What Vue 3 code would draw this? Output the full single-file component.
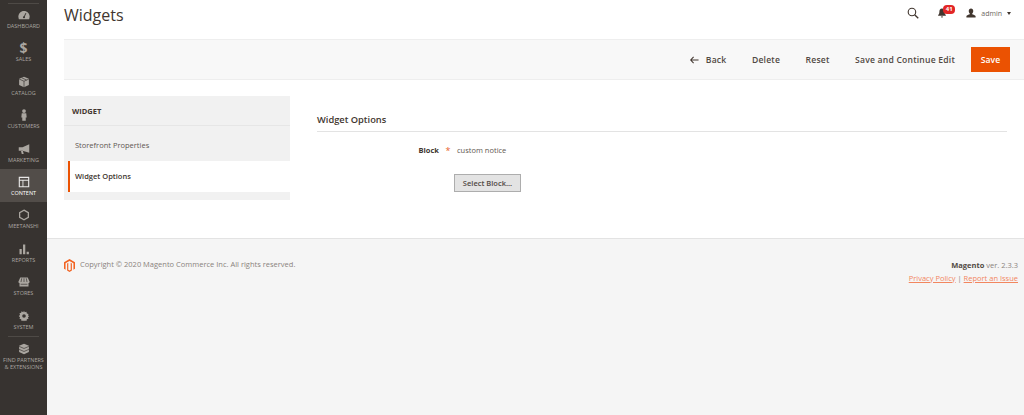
<template>
  <div class="page">
    <nav class="sidebar">
      <div class="side-line"></div>
      <div
        v-for="item in menu"
        :key="item.label"
        class="menu-item"
        :class="{ active: item.active, 'has-rule': item.rule }"
      >
        <span v-if="item.glyph" class="menu-glyph">{{ item.glyph }}</span>
        <svg v-else class="menu-icon" viewBox="0 0 16 16" v-html="item.icon"></svg>
        <span class="menu-label">{{ item.label }}</span>
      </div>
    </nav>

    <div class="main">
      <header class="topbar">
        <h1 class="page-title">Widgets</h1>
        <div class="top-actions">
          <svg class="search-icon" viewBox="0 0 16 16">
            <circle cx="6.6" cy="6.6" r="5" fill="none" stroke="#41362f" stroke-width="1.5" />
            <path d="M10.2 10.2 15 15" stroke="#41362f" stroke-width="1.8" />
          </svg>
          <div class="bell">
            <svg viewBox="0 0 12 13" class="bell-icon">
              <path d="M6 0.8c2.4 0 3.4 1.8 3.4 4 0 2.2.6 3.4 1.6 4.4v.8H1v-.8c1-1 1.6-2.2 1.6-4.4 0-2.2 1-4 3.4-4ZM4.6 11h2.8c0 .9-.6 1.400-1.400 1.400S4.600 11.900 4.600 11Z" fill="#41362f" />
            </svg>
            <span class="badge">41</span>
          </div>
          <div class="user">
            <svg viewBox="0 0 12 12" class="user-icon">
              <path d="M6 .5c1.700 0 2.700 1.200 2.700 3 0 1.400-.6 2.500-1.300 3.100v1c1.200.5 3.600 1 4.100 2.100V11.500H.5V9.700C1 8.600 3.400 8.100 4.600 7.600v-1C3.900 6 3.300 4.900 3.300 3.500 3.300 1.700 4.300.5 6 .5Z" fill="#41362f" />
            </svg>
            <span class="user-name">admin</span>
            <span class="caret"></span>
          </div>
        </div>
      </header>

      <div class="action-bar">
        <span class="action back">
          <svg viewBox="0 0 10 8" class="back-icon">
            <path d="M4 .6.8 4 4 7.400M1 4h8.500" fill="none" stroke="#41362f" stroke-width="1.200" />
          </svg>
          Back
        </span>
        <span class="action">Delete</span>
        <span class="action">Reset</span>
        <span class="action">Save and Continue Edit</span>
        <button class="save-btn">Save</button>
      </div>

      <div class="content">
        <aside class="tabs">
          <div class="tabs-title">WIDGET</div>
          <div class="tab">Storefront Properties</div>
          <div class="tab current">Widget Options</div>
        </aside>

        <section class="form">
          <h2 class="form-title">Widget Options</h2>
          <div class="field">
            <span class="field-label">Block</span>
            <span class="req">*</span>
            <span class="field-value">custom notice</span>
          </div>
          <div class="field-btn">
            <button class="select-btn">Select Block...</button>
          </div>
        </section>
      </div>

      <footer class="footer">
        <div class="copyright">
          <svg viewBox="0 0 24 28" class="logo">
            <path d="M12 0 0 7v14l3.400 2V9l8.600-5 8.600 5v14l3.400-2V7Z" fill="#f26322" />
            <path d="M12 28l-5.200-3V9.500l2.600-1.500v15.500l2.600 1.500 2.600-1.500V8l2.600 1.500V25Z" fill="#f26322" />
          </svg>
          <span>Copyright © 2020 Magento Commerce Inc. All rights reserved.</span>
        </div>
        <div class="legal">
          <div class="version"><strong>Magento</strong> ver. 2.3.3</div>
          <div class="links"><a>Privacy Policy</a> | <a>Report an Issue</a></div>
        </div>
      </footer>
    </div>
  </div>
</template>

<script setup>
const menu = [
  {
    label: 'DASHBOARD',
    icon: '<path d="M8 2.500C3.600 2.500.5 5.900.5 10c0 1.200.2 2.300.7 3.500h13.600c.5-1.200.7-2.300.7-3.500 0-4.100-3.100-7.500-7.500-7.500Z" fill="#aaa6a0"/><path d="M8 11 10.500 5.500" stroke="#373330" stroke-width="1.300"/><circle cx="8" cy="11" r="1.400" fill="#373330"/>',
  },
  {
    label: 'SALES',
    glyph: '$',
  },
  {
    label: 'CATALOG',
    icon: '<path d="M8 1 14.500 3.800V12L8 15 1.500 12V3.800Z" fill="#aaa6a0"/><path d="M1.500 4 8 7l6.500-3M8 7v8M5 2.400l6.500 3" fill="none" stroke="#373330" stroke-width=".9"/>',
  },
  {
    label: 'CUSTOMERS',
    icon: '<circle cx="8" cy="2.700" r="2.500" fill="#aaa6a0"/><path d="M5 5.800h6l.6 5.500H10.300V15.800H5.700V11.300H4.400Z" fill="#aaa6a0"/>',
  },
  {
    label: 'MARKETING',
    icon: '<path d="M15 1.800V13L6 10.300H1V5.500h5Z" fill="#aaa6a0"/><path d="M4 10.800h2.600l1 3.700H5Z" fill="#aaa6a0"/>',
  },
  {
    label: 'CONTENT',
    active: true,
    icon: '<path d="M1 1h14v14H1Z" fill="#e8e7e6"/><path d="M2.500 2.500h11v2.500h-11ZM2.500 6.200h3.500v7.300H2.500ZM7.200 6.200h6.300v7.300H7.200Z" fill="#524d49"/>',
  },
  {
    label: 'MEETANSHI',
    icon: '<path d="M8 1.500 13.800 4.800V11.200L8 14.500 2.200 11.200V4.800Z" fill="none" stroke="#aaa6a0" stroke-width="1.700"/>',
  },
  {
    label: 'REPORTS',
    icon: '<path d="M2 8h3v7H2ZM6.700 2h3v13h-3ZM11.500 11.500h3V15h-3Z" fill="#aaa6a0"/>',
  },
  {
    label: 'STORES',
    icon: '<path d="M3 2h10l2.500 5.500c0 1.200-.8 1.800-1.500 1.800V14H2V9.300C1.300 9.300.5 8.700.5 7.500Z" fill="#aaa6a0"/><path d="M5 3 4 8M8 3v5M11 3l1 5M3.500 11h9" stroke="#373330" stroke-width=".9"/>',
  },
  {
    label: 'SYSTEM',
    icon: '<path d="M8 1 9 3.100l2.200-.7.600 2.200 2.200.6-.7 2.200L15 8l-1.700 1.600.7 2.200-2.200.6-.6 2.200L9 13.900 8 15l-1-1.100-2.200.7-.6-2.200-2.200-.6.700-2.200L1 8l1.700-1.400-.7-2.200 2.200-.6.600-2.200L7 3.100Z" fill="#aaa6a0"/><circle cx="8" cy="8" r="2.400" fill="#373330"/>',
  },
  {
    label: 'FIND PARTNERS\n& EXTENSIONS',
    rule: true,
    icon: '<path d="M8 1 14.500 3.800V12L8 15 1.500 12V3.800Z" fill="#aaa6a0"/><path d="M1.500 4.500 8 7.300l6.500-2.800M1.500 8.500 8 11.300l6.500-2.800" fill="none" stroke="#373330" stroke-width=".9"/>',
  },
];
</script>

<style>
html,
body {
  margin: 0;
  padding: 0;
  background: #fff;
}
</style>

<style scoped>
.page {
  display: flex;
  width: 1024px;
  height: 415px;
  overflow: hidden;
  font-family: 'Open Sans', 'DejaVu Sans', sans-serif;
  color: #41362f;
}

.sidebar {
  width: 47px;
  flex-shrink: 0;
  background: #373330;
  padding-top: 2px;
  box-sizing: border-box;
}

.side-line {
  height: 1px;
  margin: 1px 8px -2px;
  background: #4e4a46;
}

.menu-item {
  height: 33.4px;
  display: flex;
  flex-direction: column;
  align-items: center;
  box-sizing: border-box;
  padding-top: 7px;
  color: #aaa6a0;
}

.menu-item.active {
  background: #524d49;
  color: #fff;
}

.menu-item.has-rule {
  position: relative;
}

.menu-item.has-rule::before {
  content: '';
  position: absolute;
  top: 0;
  left: 8px;
  right: 8px;
  height: 1px;
  background: #4e4a46;
}

.menu-icon {
  width: 12px;
  height: 12px;
  flex-shrink: 0;
}

.menu-glyph {
  height: 12px;
  font-size: 14px;
  line-height: 12px;
  font-weight: 700;
}

.menu-label {
  font-size: 5.5px;
  line-height: 7px;
  margin-top: 2px;
  text-align: center;
  white-space: pre;
}

.main {
  flex: 1;
  display: flex;
  flex-direction: column;
  min-width: 0;
}

.topbar {
  height: 39px;
  display: flex;
  justify-content: space-between;
  align-items: flex-start;
  padding: 0 13px 0 17px;
  flex-shrink: 0;
}

.page-title {
  margin: 3px 0 0;
  font-size: 16px;
  line-height: 25px;
  font-weight: 400;
  color: #41362f;
}

.top-actions {
  display: flex;
  align-items: center;
  height: 26px;
}

.search-icon {
  width: 12px;
  height: 12px;
  margin-right: 18px;
}

.bell {
  position: relative;
  width: 10px;
  height: 10px;
  margin-right: 19px;
}

.bell-icon {
  display: block;
  width: 10px;
  height: 10px;
}

.badge {
  position: absolute;
  top: -3px;
  left: 6px;
  width: 12px;
  height: 9px;
  border-radius: 4px;
  background: #e22626;
  color: #fff;
  font-size: 6px;
  font-weight: 700;
  line-height: 9px;
  text-align: center;
}

.user {
  display: flex;
  align-items: center;
}

.user-icon {
  width: 10px;
  height: 10px;
  margin-right: 5px;
}

.user-name {
  font-size: 7px;
  color: #6b6661;
}

.caret {
  width: 0;
  height: 0;
  margin-left: 5px;
  border-left: 2px solid transparent;
  border-right: 2px solid transparent;
  border-top: 3px solid #41362f;
}

.action-bar {
  margin-left: 17px;
  height: 41px;
  box-sizing: border-box;
  display: flex;
  align-items: center;
  justify-content: flex-end;
  padding-right: 14px;
  background: #f8f8f8;
  border-top: 1px solid #eeeeee;
  border-bottom: 1px solid #eeeeee;
  flex-shrink: 0;
}

.action {
  font-size: 8.6px;
  font-weight: 600;
  color: #514943;
  margin-right: 25.5px;
  letter-spacing: .2px;
  white-space: nowrap;
}

.action.back {
  display: flex;
  align-items: center;
}

.back-icon {
  width: 9px;
  height: 8px;
  margin-right: 7px;
}

.action:nth-child(4) {
  margin-right: 16px;
}

.save-btn {
  width: 39px;
  height: 25px;
  border: 1px solid #eb5202;
  background: #eb5202;
  color: #fff;
  font-family: inherit;
  font-size: 8.6px;
  font-weight: 600;
  padding: 0;
}

.content {
  height: 158px;
  display: flex;
  padding: 16px 17px 0;
  box-sizing: border-box;
  flex-shrink: 0;
}

.tabs {
  width: 226px;
  height: 104px;
  flex-shrink: 0;
  background: #f1f1f1;
}

.tabs-title {
  height: 29px;
  line-height: 30px;
  padding-left: 8px;
  font-weight: 700;
  color: #41362f;
  font-size: 7.5px;
  border-bottom: 1px solid #e6e6e6;
}

.tab {
  height: 35px;
  line-height: 39px;
  padding-left: 11px;
  color: #5f5751;
  font-size: 7.5px;
}

.tab.current {
  height: 31px;
  line-height: 30px;
  padding-left: 5px;
  margin-left: 4px;
  background: #fff;
  border-left: 2px solid #eb5202;
  color: #41362f;
  font-weight: 600;
}

.form {
  flex: 1;
  margin-left: 27px;
  padding-top: 16px;
}

.form-title {
  margin: 0;
  height: 19px;
  font-size: 9.3px;
  line-height: 15px;
  font-weight: 600;
  color: #41362f;
  border-bottom: 1px solid #e3e3e3;
}

.field {
  display: flex;
  align-items: center;
  height: 14px;
  margin-top: 11px;
  font-size: 7.5px;
}

.field-label {
  width: 122px;
  text-align: right;
  font-weight: 700;
  color: #41362f;
}

.req {
  width: 18px;
  text-align: center;
  color: #e8612c;
  font-size: 9px;
}

.field-value {
  color: #5f5751;
}

.field-btn {
  margin: 17px 0 0 137px;
}

.select-btn {
  display: block;
  width: 67px;
  height: 18px;
  padding: 0;
  background: #e3e3e3;
  border: 1px solid #adadad;
  color: #514943;
  font-family: inherit;
  font-size: 7.5px;
  font-weight: 600;
}

.footer {
  flex: 1;
  display: flex;
  justify-content: space-between;
  padding: 20px 6px 0 17px;
  background: #f5f5f5;
  border-top: 1px solid #e3e3e3;
  font-size: 7.5px;
  color: #8a837d;
}

.copyright {
  display: flex;
  align-items: flex-start;
}

.logo {
  width: 11px;
  height: 13px;
  margin: 0 5px 0 0;
}

.legal {
  text-align: right;
  line-height: 12.5px;
}

.version strong {
  font-weight: 700;
  color: #514943;
}

.links a {
  color: #f2865f;
  text-decoration: underline;
}
</style>
